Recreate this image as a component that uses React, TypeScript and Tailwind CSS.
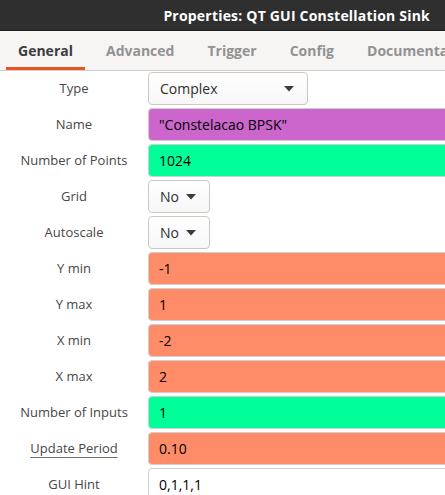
import React from 'react';

type Row = {
  label: string;
  value: string;
  kind: 'combo' | 'text';
  color?: string;
  comboWidth?: string;
  underline?: boolean;
};

const rows: Row[] = [
  { label: 'Type', value: 'Complex', kind: 'combo', comboWidth: 'w-[160px]' },
  { label: 'Name', value: '"Constelacao BPSK"', kind: 'text', color: 'bg-[#cc66cc]' },
  { label: 'Number of Points', value: '1024', kind: 'text', color: 'bg-[#00ff99]' },
  { label: 'Grid', value: 'No', kind: 'combo', comboWidth: 'w-[62px]' },
  { label: 'Autoscale', value: 'No', kind: 'combo', comboWidth: 'w-[62px]' },
  { label: 'Y min', value: '-1', kind: 'text', color: 'bg-[#ff8c69]' },
  { label: 'Y max', value: '1', kind: 'text', color: 'bg-[#ff8c69]' },
  { label: 'X min', value: '-2', kind: 'text', color: 'bg-[#ff8c69]' },
  { label: 'X max', value: '2', kind: 'text', color: 'bg-[#ff8c69]' },
  { label: 'Number of Inputs', value: '1', kind: 'text', color: 'bg-[#00ff99]' },
  { label: 'Update Period', value: '0.10', kind: 'text', color: 'bg-[#ff8c69]', underline: true },
  { label: 'GUI Hint', value: '0,1,1,1', kind: 'text', color: 'bg-white' },
];

const tabs = ['General', 'Advanced', 'Trigger', 'Config', 'Documentation'];

function Arrow() {
  return (
    <svg width="10" height="6" viewBox="0 0 10 6" className="shrink-0">
      <path d="M0 0h10L5 5.5z" fill="#3c3c3c" />
    </svg>
  );
}

export default function App() {
  return (
    <div
      className="w-[445px] h-[495px] overflow-hidden bg-white"
      style={{ fontFamily: '"Open Sans", "DejaVu Sans", sans-serif' }}
    >
      {/* header bar */}
      <div className="h-[31px] bg-[#2f2f2f] border-b border-[#1e1e1e] flex items-center justify-end pr-[15px]">
        <span className="text-white font-bold text-[14px] tracking-[0.2px] whitespace-nowrap">
          Properties: QT GUI Constellation Sink
        </span>
      </div>

      {/* tabs */}
      <div className="h-[40px] bg-[#f6f5f4] border-b border-[#cdcdcd] flex items-end pl-[6px] gap-[9px] whitespace-nowrap">
        {tabs.map((t, i) => (
          <div
            key={t}
            className={
              i === 0
                ? 'h-full px-[12px] pt-[3px] flex items-center font-bold text-[14px] text-[#3d3d3d] border-b-[3px] border-[#e95420]'
                : 'h-full px-[12px] pt-[3px] flex items-center font-bold text-[14px] text-[#929292] border-b-[3px] border-transparent'
            }
          >
            {t}
          </div>
        ))}
      </div>

      {/* form */}
      <div className="w-[470px] pt-[1px] flex flex-col gap-[3px]">
        {rows.map((r) => (
          <div key={r.label} className="flex h-[33px] items-center">
            <div className="w-[148px] flex justify-center text-[13px] text-[#474747]">
              <span className={r.underline ? 'underline decoration-[#6e6e6e] underline-offset-[4px]' : ''}>
                {r.label}
              </span>
            </div>
            {r.kind === 'combo' ? (
              <div
                className={`${r.comboWidth} h-[33px] rounded-[4px] border border-[#cdc7c2] bg-gradient-to-b from-white to-[#f7f7f7] flex items-center justify-between pl-[11px] pr-[13px] text-[14px] text-[#2e2e2e]`}
              >
                <span>{r.value}</span>
                <Arrow />
              </div>
            ) : (
              <div
                className={`flex-1 h-[33px] rounded-[4px] border border-[#cfcfcf] ${r.color} flex items-center pl-[10px] text-[14px] text-black`}
              >
                {r.value}
              </div>
            )}
          </div>
        ))}
      </div>
    </div>
  );
}
